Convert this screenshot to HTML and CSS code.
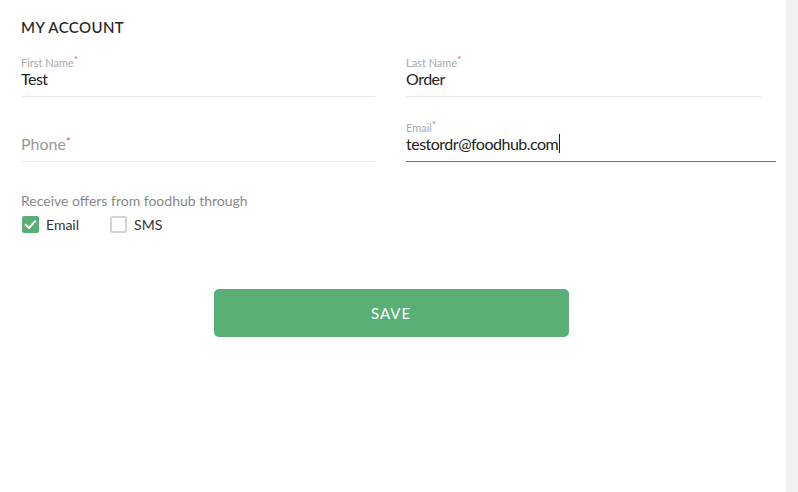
FILE: index.html
```html
<!DOCTYPE html>
<html lang="en">
  <head>
    <meta charset="UTF-8" />
    <title>My Account</title>
    <link rel="stylesheet" href="styles.css">
  </head>
  <body>
    <div class="page">
      <div class="main">
        <h1 class="title">MY ACCOUNT</h1>
        <form class="account-form">
          <div class="fields">
            <div class="field">
              <label class="field-label">First Name<span class="req">*</span></label>
              <div class="field-value">Test</div>
            </div>
            <div class="field">
              <label class="field-label">Last Name<span class="req">*</span></label>
              <div class="field-value">Order</div>
            </div>
            <div class="field">
              <label class="field-label"></label>
              <div class="field-value placeholder">Phone<span class="req">*</span></div>
            </div>
            <div class="field field-focus">
              <label class="field-label">Email<span class="req">*</span></label>
              <div class="field-value"><span class="caret">testordr@foodhub.com</span></div>
            </div>
          </div>

          <p class="offers-title">Receive offers from foodhub through</p>
          <div class="offers">
            <label class="check">
              <span class="box checked">
                <svg viewBox="0 0 17 17" width="17" height="17">
                  <path d="M3.6 8.8 L7 12 L13.2 5.2" fill="none" stroke="#fff" stroke-width="2" stroke-linecap="round" stroke-linejoin="round" />
                </svg>
              </span>
              Email
            </label>
            <label class="check">
              <span class="box"></span>
              SMS
            </label>
          </div>

          <div class="actions">
            <button type="submit" class="btn">SAVE</button>
          </div>
        </form>
      </div>
      <div class="scrollbar"></div>
    </div>
  </body>
</html>
```

FILE: styles.css
```css
html,
body {
  height: 100%;
}
body {
  margin: 0;
  font-family: Lato, "Open Sans", sans-serif;
  background: #ffffff;
  color: #222222;
}
.page {
  display: flex;
  height: 100%;
}
.main {
  flex: 1;
  padding: 0 0 0 21px;
}
.scrollbar {
  width: 12px;
  background: #f1f1f1;
}
.title {
  margin: 17px 0 0;
  font-size: 15px;
  font-weight: 500;
  letter-spacing: 0.4px;
  line-height: 20px;
  color: #222222;
}
.fields {
  display: grid;
  grid-template-columns: 354px 355px;
  column-gap: 31px;
  row-gap: 24px;
  margin-top: 19px;
}
.field {
  border-bottom: 1px solid #e8e8e8;
  padding-bottom: 7px;
}
.field-focus {
  margin-right: -15px;
  border-bottom-color: #3b7ea8;
}
.field-label {
  display: block;
  height: 13px;
  font-size: 11px;
  line-height: 13px;
  color: #aaaaaa;
}
.field-value {
  font-size: 16px;
  line-height: 20px;
  letter-spacing: -0.5px;
  color: #222222;
}
.placeholder {
  color: #999999;
  letter-spacing: 0;
}
.req {
  color: #e05252;
  font-size: 9px;
  vertical-align: top;
  position: relative;
  top: -3px;
}
.placeholder .req {
  top: -2px;
  font-size: 11px;
}
.caret {
  border-right: 1px solid #222222;
  padding-right: 1px;
}
.offers-title {
  margin: 30px 0 0;
  font-size: 14px;
  line-height: 18px;
  color: #888888;
}
.offers {
  display: flex;
  gap: 31px;
  margin-top: 6px;
}
.check {
  display: flex;
  align-items: center;
  gap: 7px;
  font-size: 14px;
  color: #333333;
}
.box {
  width: 13px;
  height: 13px;
  border: 2px solid #d4d4d4;
  border-radius: 2px;
  display: flex;
  align-items: center;
  justify-content: center;
}
.box.checked {
  width: 17px;
  height: 17px;
  margin-left: 1px;
  border: none;
  background: #5aae77;
}
.actions {
  width: 740px;
  display: flex;
  justify-content: center;
  margin-top: 56px;
}
.btn {
  width: 355px;
  height: 48px;
  background: #5aaf77;
  color: #ffffff;
  border: none;
  border-radius: 5px;
  font-family: Lato, sans-serif;
  font-size: 15px;
  letter-spacing: 1px;
  cursor: pointer;
}
```
